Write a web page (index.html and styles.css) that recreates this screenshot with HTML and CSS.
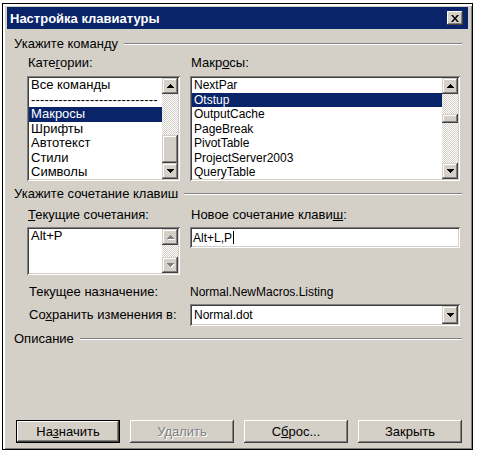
FILE: index.html
```html
<!DOCTYPE html>
<html lang="ru">
<head>
<meta charset="utf-8">
<title>Настройка клавиатуры</title>
<link rel="stylesheet" href="styles.css">
</head>
<body>
<div class="window">
  <div class="titlebar">
    <span class="title">Настройка клавиатуры</span>
    <span class="close-btn"><svg width="8" height="7" viewBox="0 0 8 7"><path d="M0 0h2l2 2.4L6 0h2L5 3.5 8 7H6L4 4.6 2 7H0l3-3.5z" fill="#000"/></svg></span>
  </div>
  <div class="content">
    <div class="group"><span>Укажите команду</span><span class="etch"></span></div>
    <div class="cols first">
      <div class="col">
        <div class="label">Кате<u>г</u>ории:</div>
        <div class="listbox tall">
          <ul class="items">
            <li>Все команды</li>
            <li class="sep">----------------------------</li>
            <li class="sel">Макросы</li>
            <li>Шрифты</li>
            <li>Автотекст</li>
            <li>Стили</li>
            <li>Символы</li>
          </ul>
          <div class="vscroll">
            <span class="sbtn"><svg width="7" height="4" viewBox="0 0 7 4"><path d="M3 0h1v1h1v1h1v1h1v1H0V3h1V2h1V1h1z"/></svg></span>
            <span class="track" style="height:41px"></span>
            <span class="thumb" style="height:28px"></span>
            <span class="track rest"></span>
            <span class="sbtn"><svg width="7" height="4" viewBox="0 0 7 4"><path d="M0 0h7v1H6v1H5v1H4v1H3V3H2V2H1V1H0z"/></svg></span>
          </div>
        </div>
      </div>
      <div class="col">
        <div class="label">Макр<u>о</u>сы:</div>
        <div class="listbox tall latin">
          <ul class="items">
            <li>NextPar</li>
            <li class="sel">Otstup</li>
            <li>OutputCache</li>
            <li>PageBreak</li>
            <li>PivotTable</li>
            <li>ProjectServer2003</li>
            <li>QueryTable</li>
          </ul>
          <div class="vscroll">
            <span class="sbtn"><svg width="7" height="4" viewBox="0 0 7 4"><path d="M3 0h1v1h1v1h1v1h1v1H0V3h1V2h1V1h1z"/></svg></span>
            <span class="track" style="height:20px"></span>
            <span class="thumb" style="height:9px"></span>
            <span class="track rest"></span>
            <span class="sbtn"><svg width="7" height="4" viewBox="0 0 7 4"><path d="M0 0h7v1H6v1H5v1H4v1H3V3H2V2H1V1H0z"/></svg></span>
          </div>
        </div>
      </div>
    </div>

    <div class="group second"><span>Укажите сочетание клавиш</span><span class="etch"></span></div>
    <div class="cols keys">
      <div class="col">
        <div class="label"><u>Т</u>екущие сочетания:</div>
        <div class="listbox short">
          <ul class="items">
            <li>Alt+P</li>
          </ul>
          <div class="vscroll disabled">
            <span class="sbtn"><svg width="7" height="4" viewBox="0 0 7 4"><path d="M3 0h1v1h1v1h1v1h1v1H0V3h1V2h1V1h1z"/></svg></span>
            <span class="track rest"></span>
            <span class="sbtn"><svg width="7" height="4" viewBox="0 0 7 4"><path d="M0 0h7v1H6v1H5v1H4v1H3V3H2V2H1V1H0z"/></svg></span>
          </div>
        </div>
      </div>
      <div class="col">
        <div class="label">Новое сочетание клави<u>ш</u>:</div>
        <div class="field">Alt+L,P<span class="caret"></span></div>
      </div>
    </div>

    <div class="row assign">
      <div class="rlabel">Текущее назначение:</div>
      <div class="rvalue">Normal.NewMacros.Listing</div>
    </div>
    <div class="row save">
      <div class="rlabel">Со<u>х</u>ранить изменения в:</div>
      <div class="combo">
        <span class="value">Normal.dot</span>
        <span class="dd"><svg width="7" height="4" viewBox="0 0 7 4"><path d="M0 0h7v1H6v1H5v1H4v1H3V3H2V2H1V1H0z"/></svg></span>
      </div>
    </div>

    <div class="group third"><span>Описание</span><span class="etch"></span></div>

    <div class="buttons">
      <span class="btn default">На<u>з</u>начить</span>
      <span class="btn disabled">Удалить</span>
      <span class="btn">С<u>б</u>рос...</span>
      <span class="btn">Закрыть</span>
    </div>
  </div>
</div>
</body>
</html>
```

FILE: styles.css
```css
* { box-sizing: border-box; }

body {
  margin: 0;
  background: #fff;
  font-family: "Liberation Sans", Arial, sans-serif;
  font-size: 13px;
  color: #000;
}

.window {
  margin: 3px 0 0 2px;
  width: 471px;
  height: 447px;
  border: 1px solid #000;
  background: #d4d0c8;
  padding: 3px 4px 4px 4px;
  display: flex;
  flex-direction: column;
  box-shadow: inset 2px 2px #fff, inset -1px -1px #808080;
}

.titlebar {
  height: 22px;
  flex: none;
  background: #0a246a;
  color: #fff;
  font-weight: bold;
  display: flex;
  align-items: center;
  padding: 0 5px 0 3px;
}

.close-btn {
  margin-left: auto;
  width: 16px;
  height: 14px;
  background: #d4d0c8;
  display: flex;
  align-items: center;
  justify-content: center;
  box-shadow: inset -1px -1px #404040, inset 1px 1px #fff, inset -2px -2px #808080;
}

.content {
  flex: 1;
  display: flex;
  flex-direction: column;
  padding: 8px 6px 2px 7px;
}

.group {
  display: flex;
  align-items: center;
  height: 14px;
  line-height: 14px;
}
.group.second { margin-top: 6px; }
.group.third { margin-top: 6px; }

.etch {
  flex: 1;
  margin-left: 6px;
  height: 2px;
  border-top: 1px solid #808080;
  border-bottom: 1px solid #fff;
}

.cols {
  display: grid;
  grid-template-columns: 153px 270px;
  column-gap: 10px;
  padding-left: 13px;
}

.label {
  line-height: 14px;
  padding-left: 1px;
  white-space: nowrap;
}
.cols.first .label { margin-top: 5px; }
.cols.first .listbox { margin-top: 6px; }
.cols.keys .label { margin-top: 7px; }
.cols.keys .listbox,
.cols.keys .field { margin-top: 5px; }

.listbox {
  background: #fff;
  display: flex;
  padding: 2px;
  box-shadow: inset 1px 1px #808080, inset -1px -1px #fff, inset 2px 2px #404040, inset -2px -2px #d4d0c8;
}
.listbox.tall { height: 105px; }
.listbox.short { height: 48px; }
.listbox.latin { font-size: 12px; }

.items {
  flex: 1;
  min-width: 0;
  list-style: none;
  margin: 0;
  padding: 0;
  overflow: hidden;
}
.items li {
  height: 14.5px;
  line-height: 14.5px;
  padding-left: 2px;
  white-space: nowrap;
}
.items li.sel {
  background: #0a246a;
  color: #fff;
}
.items li.sep {
  letter-spacing: 0.2px;
}

.vscroll {
  width: 16px;
  flex: none;
  display: flex;
  flex-direction: column;
}

.sbtn, .thumb, .dd {
  background: #d4d0c8;
  box-shadow: inset -1px -1px #404040, inset 1px 1px #d4d0c8, inset -2px -2px #808080, inset 2px 2px #fff;
}
.sbtn {
  height: 16px;
  flex: none;
  display: flex;
  align-items: center;
  justify-content: center;
}
.sbtn svg, .dd svg { fill: #000; }
.vscroll.disabled svg {
  fill: #808080;
  filter: drop-shadow(1px 1px 0 #fff);
}

.thumb { flex: none; }

.track {
  flex: none;
  background-color: #d4d0c8;
  background-image: conic-gradient(#fff 25%, #d4d0c8 0 50%, #fff 0 75%, #d4d0c8 0);
  background-size: 2px 2px;
}
.track.rest { flex: 1; }

.field {
  height: 21px;
  background: #fff;
  padding: 0 3px;
  display: flex;
  align-items: center;
  font-size: 12px;
  box-shadow: inset 1px 1px #808080, inset -1px -1px #fff, inset 2px 2px #404040, inset -2px -2px #d4d0c8;
}

.caret {
  display: inline-block;
  width: 1px;
  height: 13px;
  background: #000;
  margin-left: 1px;
}

.row {
  display: grid;
  grid-template-columns: 153px 270px;
  column-gap: 10px;
  padding-left: 13px;
  align-items: center;
}
.row.assign { margin-top: 10px; }
.row.save { margin-top: 5px; }

.rlabel {
  padding-left: 2px;
  line-height: 14px;
  white-space: nowrap;
}
.rvalue {
  font-size: 12px;
  line-height: 14px;
}

.combo {
  height: 22px;
  background: #fff;
  display: flex;
  padding: 2px;
  box-shadow: inset 1px 1px #808080, inset -1px -1px #fff, inset 2px 2px #404040, inset -2px -2px #d4d0c8;
}
.combo .value {
  flex: 1;
  padding-left: 2px;
  line-height: 18px;
  font-size: 12px;
}
.combo .dd {
  width: 16px;
  display: flex;
  align-items: center;
  justify-content: center;
}

.buttons {
  margin-top: auto;
  display: flex;
  gap: 10px;
  padding-left: 2px;
}

.btn {
  width: 104px;
  height: 23px;
  line-height: 23px;
  text-align: center;
  background: #d4d0c8;
  box-shadow: inset -1px -1px #404040, inset 1px 1px #fff, inset -2px -2px #808080, inset 2px 2px #d4d0c8;
}
.btn.default {
  line-height: 21px;
  border: 1px solid #000;
}
.btn.disabled {
  color: #808080;
  text-shadow: 1px 1px 0 #fff;
}
```
